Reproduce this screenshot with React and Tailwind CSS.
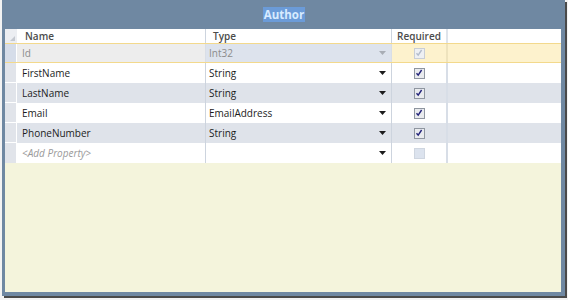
import React from "react";

const rows = [
  { name: "FirstName", type: "String", req: true, alt: false },
  { name: "LastName", type: "String", req: true, alt: true },
  { name: "Email", type: "EmailAddress", req: true, alt: false },
  { name: "PhoneNumber", type: "String", req: true, alt: true },
];

function Arrow({ gray }) {
  return (
    <svg width="7" height="4" viewBox="0 0 7 4" className="shrink-0">
      <path d="M0 0h7L3.5 4z" fill={gray ? "#a8adb5" : "#1b1b1b"} />
    </svg>
  );
}

function Check({ checked, disabled }) {
  if (disabled && !checked) {
    return <div className="w-[11px] h-[11px] border border-[#cfd6e0] bg-[#dce3ee]" />;
  }
  return (
    <div
      className={`w-[11px] h-[11px] border flex items-center justify-center ${
        disabled ? "border-[#c9ced6] bg-[#eef0f3]" : "border-[#8f96a0] bg-[#e9ebee]"
      }`}
    >
      <svg width="8" height="8" viewBox="0 0 8 8">
        <path
          d="M1.5 4.2l1.7 2L6.6 1"
          fill="none"
          stroke={disabled ? "#b3bccb" : "#23237a"}
          strokeWidth="1.4"
        />
      </svg>
    </div>
  );
}

export default function App() {
  return (
    <div
      className="w-[568px] h-[300px] bg-[#f3f3f3] pl-[2px] overflow-hidden"
      style={{ fontFamily: '"Open Sans", "Noto Sans", sans-serif' }}
    >
      <div className="w-[563px] h-[296px] bg-[#6f88a2] flex flex-col pl-[3px] pr-[4px] pb-[4px] shadow-[2px_2px_0_#4a4a4a]">
        <div className="h-[29px] flex items-center justify-center pl-[2px]">
          <span className="bg-[#6b9bd8] text-[#d8ebff] font-bold text-[11.5px] leading-[15px] px-[1px]">
            Author
          </span>
        </div>
        <div className="flex-1 bg-[#f4f4dc] flex flex-col text-[10px]">
          {/* header */}
          <div className="h-[14px] bg-white flex text-[#4b4b4b] font-semibold leading-[14px]">
            <div className="w-[12px] bg-[#eceef2] relative">
              <div className="absolute right-[2px] bottom-[2px] w-0 h-0 border-l-[5px] border-l-transparent border-b-[5px] border-b-[#c4c8cf]" />
            </div>
            <div className="w-[189px] pl-[8px] border-r border-[#cdd4de]">Name</div>
            <div className="w-[186px] pl-[7px] border-r border-[#cdd4de]">Type</div>
            <div className="w-[56px] text-center border-r-2 border-[#dfe4eb]">Required</div>
            <div className="flex-1" />
          </div>
          {/* Id row */}
          <div className="h-[20px] flex border-y border-[#f3d98c] text-[#8c8c8c]">
            <div className="w-[12px] bg-[#d6dde9] border-r border-white" />
            <div className="w-[189px] bg-[#ededed] pl-[5px] flex items-center border-r border-[#d9dee6]">Id</div>
            <div className="w-[186px] bg-[#dde3ed] pl-[3px] pr-[5px] flex items-center justify-between border-r border-[#d9dee6]">
              <span>Int32</span>
              <Arrow gray />
            </div>
            <div className="w-[56px] bg-[#fdf2cd] flex items-center justify-center border-r-2 border-[#eee3bd]">
              <Check checked disabled />
            </div>
            <div className="flex-1 bg-[#fdf2cd]" />
          </div>
          {rows.map((r) => (
            <div key={r.name} className={`h-[20px] flex text-[#1c1c1c] ${r.alt ? "bg-[#dfe3ea]" : "bg-white"}`}>
              <div className="w-[12px] bg-[#e1e4ea] border-r border-white border-b" />
              <div className="w-[189px] pl-[5px] flex items-center border-r border-[#cdd4de]">{r.name}</div>
              <div className="w-[186px] pl-[3px] pr-[5px] flex items-center justify-between border-r border-[#cdd4de]">
                <span>{r.type}</span>
                <Arrow />
              </div>
              <div className="w-[56px] flex items-center justify-center border-r-2 border-[#d8dee7]">
                <Check checked={r.req} />
              </div>
              <div className="flex-1" />
            </div>
          ))}
          <div className="h-[20px] flex bg-white text-[#9a9a9a]">
            <div className="w-[12px] bg-[#e1e4ea] border-r border-white" />
            <div className="w-[189px] pl-[5px] flex items-center italic border-r border-[#cdd4de]">&lt;Add Property&gt;</div>
            <div className="w-[186px] pl-[3px] pr-[5px] flex items-center justify-end border-r border-[#cdd4de]">
              <Arrow />
            </div>
            <div className="w-[56px] flex items-center justify-center border-r-2 border-[#d8dee7]">
              <Check checked={false} disabled />
            </div>
            <div className="flex-1" />
          </div>
        </div>
      </div>
    </div>
  );
}
